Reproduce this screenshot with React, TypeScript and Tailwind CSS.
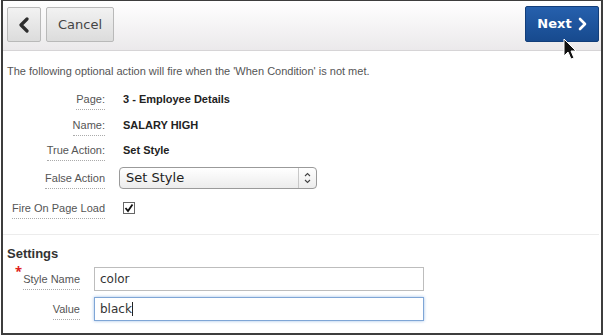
// Wizard step: false action for a dynamic action
const sans = "font-['Liberation_Sans',Arial,sans-serif]";
const deja = "font-['DejaVu_Sans',sans-serif]";

function Label({ children, w = "w-[98px]" }: { children: React.ReactNode; w?: string }) {
  return (
    <div className={`${w} flex justify-end shrink-0`}>
      <span className={`${sans} text-[11px] text-[#555] border-b border-dotted border-[#aaa] leading-[15px] pt-[3px] pb-[2px]`}>
        {children}
      </span>
    </div>
  );
}

function Cursor() {
  return (
    <svg className="absolute left-[563px] top-[38px]" width="16" height="24" viewBox="0 0 16 24">
      <path d="M1 1 L1 18 L5 14 L8 21 L11 20 L8 13 L13 13 Z" fill="#111" stroke="#fff" strokeWidth="1" />
    </svg>
  );
}

export default function App() {
  return (
    <div className="w-[604px] h-[336px] bg-white relative">
      <div className="ml-px w-[602px] h-[335px] border-2 border-t border-[#3d3d3d] flex flex-col overflow-hidden">
        {/* Header */}
        <div className="h-[50px] shrink-0 bg-gradient-to-b from-white to-[#ebe9eb] border-b border-[#d6d4d6] flex items-start justify-between pl-[4px] pr-[2px] pt-[5px]">
          <div className="flex gap-[5px] pt-px">
            <button className="w-[34px] h-[35px] rounded-[2px] border border-[#b9b9b9] bg-gradient-to-b from-[#f2f2f2] to-[#dcdcdc] flex items-center justify-center">
              <svg width="12" height="16" viewBox="0 0 12 16">
                <path d="M9 2 L3 8 L9 14" fill="none" stroke="#2e2e2e" strokeWidth="3.2" strokeLinecap="round" strokeLinejoin="round" />
              </svg>
            </button>
            <button className={`w-[68px] h-[35px] rounded-[2px] border border-[#b9b9b9] bg-gradient-to-b from-[#f2f2f2] to-[#dcdcdc] ${deja} text-[13px] text-[#444]`}>
              Cancel
            </button>
          </div>
          <button className={`w-[74px] h-[36px] rounded-[2px] border border-[#123e7a] bg-gradient-to-b from-[#2660ad] to-[#174a8e] flex items-center justify-center gap-[6px] ${deja} font-bold text-[13px] text-white`}>
            Next
            <svg width="9" height="14" viewBox="0 0 9 14">
              <path d="M2 2 L7 7 L2 12" fill="none" stroke="#fff" strokeWidth="2.6" strokeLinecap="round" strokeLinejoin="round" />
            </svg>
          </button>
        </div>

        {/* Body */}
        <div className="pl-[4px] pt-[13px]">
          <p className={`${sans} text-[11px] text-[#555] leading-[14px]`}>
            The following optional action will fire when the 'When Condition' is not met.
          </p>
          <div className="flex flex-col mt-[8px]">
            <div className="flex items-center gap-[18px] h-[26px]">
              <Label>Page:</Label>
              <span className={`${sans} text-[11px] font-bold text-[#222]`}>3 - Employee Details</span>
            </div>
            <div className="flex items-center gap-[18px] h-[26px]">
              <Label>Name:</Label>
              <span className={`${sans} text-[11px] font-bold text-[#222]`}>SALARY HIGH</span>
            </div>
            <div className="flex items-center gap-[18px] h-[25px]">
              <Label>True Action:</Label>
              <span className={`${sans} text-[11px] font-bold text-[#222]`}>Set Style</span>
            </div>
            <div className="flex items-center gap-[14px] h-[30px]">
              <Label>False Action</Label>
              <div className="w-[198px] h-[22px] rounded-[4px] border border-[#9a9a9a] bg-gradient-to-b from-white to-[#ececec] flex items-center">
                <span className={`flex-1 pl-[6px] ${deja} text-[13px] text-[#222]`}>Set Style</span>
                <div className="w-[18px] h-full border-l border-[#c8c8c8] flex items-center justify-center">
                  <svg width="7" height="12" viewBox="0 0 7 12">
                    <path d="M1 4 L3.5 1.5 L6 4 M1 8 L3.5 10.5 L6 8" fill="none" stroke="#444" strokeWidth="1.1" />
                  </svg>
                </div>
              </div>
            </div>
            <div className="flex items-center gap-[18px] h-[30px]">
              <Label>Fire On Page Load</Label>
              <div className="w-[12px] h-[12px] border border-[#666] bg-white flex items-center justify-center">
                <svg width="10" height="10" viewBox="0 0 10 10">
                  <path d="M1.5 5 L4 8 L8.5 1.5" fill="none" stroke="#111" strokeWidth="1.8" />
                </svg>
              </div>
            </div>
          </div>
        </div>

        <div className="mt-[11px] mr-[2px] border-t border-[#ececec]" />

        <div className="pl-[4px] pt-[11px]">
          <h2 className={`${sans} text-[13px] font-bold text-[#333] leading-[16px]`}>Settings</h2>
          <div className="flex flex-col gap-[6px] mt-[5px]">
            <div className="flex items-center gap-[14px] h-[24px]">
              <div className="w-[73px] flex justify-end items-start shrink-0">
                <span className="text-[#e02020] text-[13px] font-bold leading-none -mt-[4px] mr-px">*</span>
                <span className={`${sans} text-[11px] text-[#555] border-b border-dotted border-[#aaa] leading-[15px] pt-[3px] pb-[2px]`}>
                  Style Name
                </span>
              </div>
              <div className={`w-[330px] h-[24px] border border-[#bdbdbd] bg-white flex items-center pl-[5px] ${deja} text-[12px] text-[#333]`}>
                color
              </div>
            </div>
            <div className="flex items-center gap-[14px] h-[24px]">
              <Label w="w-[73px]">Value</Label>
              <div className={`w-[330px] h-[24px] border border-[#7fa6d6] shadow-[0_0_3px_#9dbfe8] bg-white flex items-center pl-[5px] ${deja} text-[12px] text-[#333]`}>
                black
                <span className="w-px h-[14px] bg-[#222]" />
              </div>
            </div>
          </div>
        </div>
      </div>
      <Cursor />
    </div>
  );
}
